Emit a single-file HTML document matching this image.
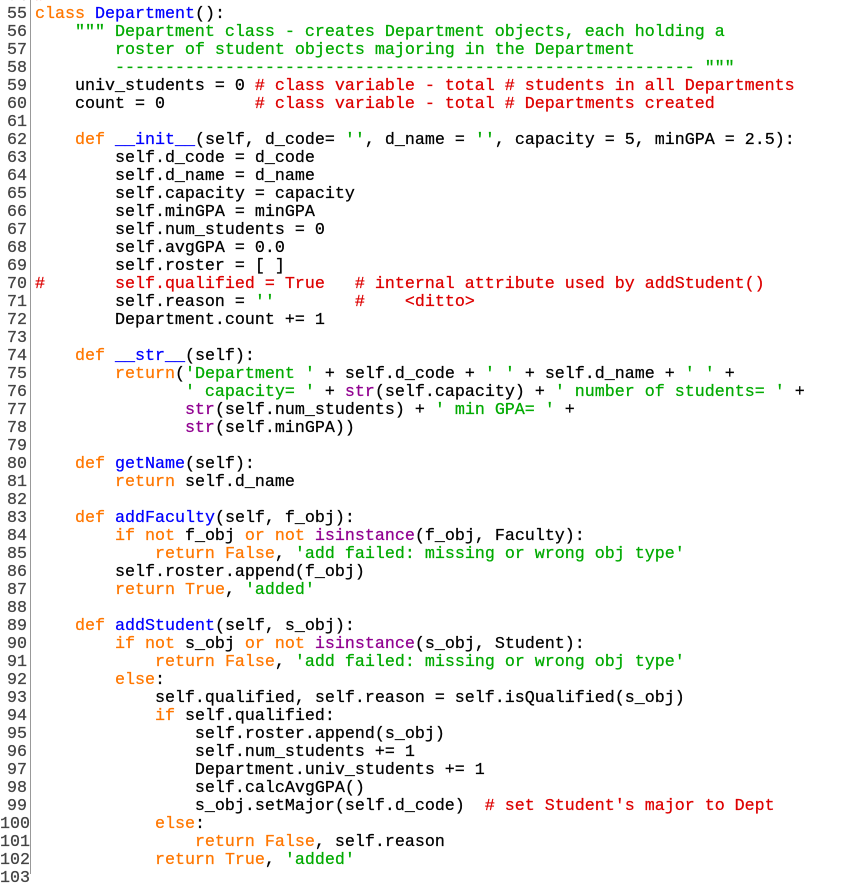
<!DOCTYPE html>
<html><head><meta charset="utf-8"><style>
html,body{margin:0;padding:0;background:#fff;width:865px;height:874px;overflow:hidden;}
.wrap{position:absolute;left:0;top:-12px;font-family:"Liberation Mono",monospace;font-size:16.67px;line-height:18px;-webkit-text-stroke:0.25px currentColor;}
.ln{position:absolute;left:0;width:27px;text-align:right;color:#444;white-space:pre;margin:0;font:inherit;}
.code{position:absolute;left:35px;color:#000;white-space:pre;margin:0;font:inherit;}
.bar{position:absolute;left:30px;top:0;width:1px;height:874px;background:#999;}
.k{color:#ff7700}.f{color:#0000ff}.s{color:#00aa00}.c{color:#dd0000}.b{color:#900090}
</style></head><body>
<div class="bar"></div>
<div class="wrap">
<pre class="ln">54
55
56
57
58
59
60
61
62
63
64
65
66
67
68
69
70
71
72
73
74
75
76
77
78
79
80
81
82
83
84
85
86
87
88
89
90
91
92
93
94
95
96
97
98
99
100
101
102
103</pre>
<pre class="code"><span class="c">#</span>
<span class="k">class</span> <span class="f">Department</span>():
    <span class="s">""" Department class - creates Department objects, each holding a</span>
<span class="s">        roster of student objects majoring in the Department</span>
<span class="s">        ---------------------------------------------------------- """</span>
    univ_students = 0 <span class="c"># class variable - total # students in all Departments</span>
    count = 0         <span class="c"># class variable - total # Departments created</span>

    <span class="k">def</span> <span class="f">__init__</span>(self, d_code= <span class="s">''</span>, d_name = <span class="s">''</span>, capacity = 5, minGPA = 2.5):
        self.d_code = d_code
        self.d_name = d_name
        self.capacity = capacity
        self.minGPA = minGPA
        self.num_students = 0
        self.avgGPA = 0.0
        self.roster = [ ]
<span class="c">#       self.qualified = True   # internal attribute used by addStudent()</span>
        self.reason = <span class="s">''</span>        <span class="c">#    &lt;ditto&gt;</span>
        Department.count += 1

    <span class="k">def</span> <span class="f">__str__</span>(self):
        <span class="k">return</span>(<span class="s">'Department '</span> + self.d_code + <span class="s">' '</span> + self.d_name + <span class="s">' '</span> +
               <span class="s">' capacity= '</span> + <span class="b">str</span>(self.capacity) + <span class="s">' number of students= '</span> +
               <span class="b">str</span>(self.num_students) + <span class="s">' min GPA= '</span> +
               <span class="b">str</span>(self.minGPA))

    <span class="k">def</span> <span class="f">getName</span>(self):
        <span class="k">return</span> self.d_name

    <span class="k">def</span> <span class="f">addFaculty</span>(self, f_obj):
        <span class="k">if not</span> f_obj <span class="k">or not</span> <span class="b">isinstance</span>(f_obj, Faculty):
            <span class="k">return</span> <span class="k">False</span>, <span class="s">'add failed: missing or wrong obj type'</span>
        self.roster.append(f_obj)
        <span class="k">return</span> <span class="k">True</span>, <span class="s">'added'</span>

    <span class="k">def</span> <span class="f">addStudent</span>(self, s_obj):
        <span class="k">if not</span> s_obj <span class="k">or not</span> <span class="b">isinstance</span>(s_obj, Student):
            <span class="k">return</span> <span class="k">False</span>, <span class="s">'add failed: missing or wrong obj type'</span>
        <span class="k">else</span>:
            self.qualified, self.reason = self.isQualified(s_obj)
            <span class="k">if</span> self.qualified:
                self.roster.append(s_obj)
                self.num_students += 1
                Department.univ_students += 1
                self.calcAvgGPA()
                s_obj.setMajor(self.d_code)  <span class="c"># set Student's major to Dept</span>
            <span class="k">else</span>:
                <span class="k">return</span> <span class="k">False</span>, self.reason
            <span class="k">return</span> <span class="k">True</span>, <span class="s">'added'</span>
</pre>
</div>
</body></html>
